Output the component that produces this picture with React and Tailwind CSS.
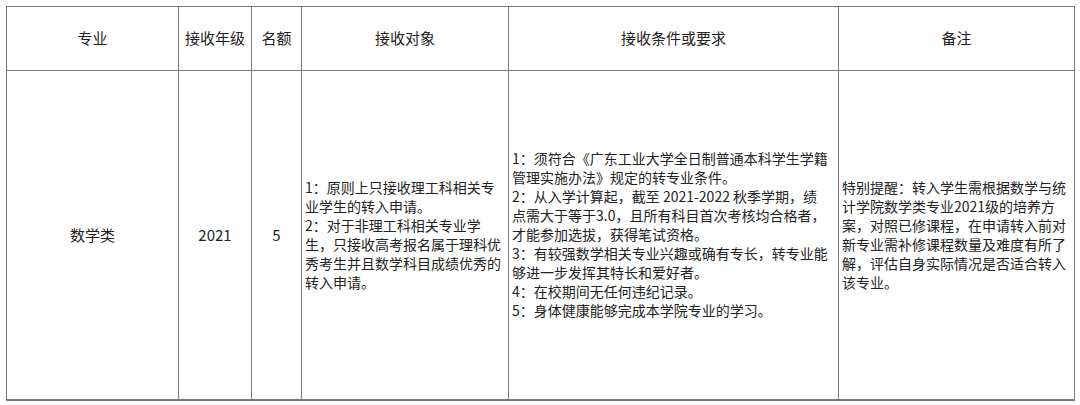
const font = { fontFamily: '"Noto Sans CJK SC", "Microsoft YaHei", sans-serif' };

const Lines = ({ lines }) => (
  <div className="text-left leading-[19px]">
    {lines.map((l, i) => (
      <div key={i} className="whitespace-nowrap">{l}</div>
    ))}
  </div>
);

const targets = [
  '1：原则上只接收理工科相关专',
  '业学生的转入申请。',
  '2：对于非理工科相关专业学',
  '生，只接收高考报名属于理科优',
  '秀考生并且数学科目成绩优秀的',
  '转入申请。',
];

const conditions = [
  '1：须符合《广东工业大学全日制普通本科学生学籍',
  '管理实施办法》规定的转专业条件。',
  '2：从入学计算起，截至 2021-2022 秋季学期，绩',
  '点需大于等于3.0，且所有科目首次考核均合格者，',
  '才能参加选拔，获得笔试资格。',
  '3：有较强数学相关专业兴趣或确有专长，转专业能',
  '够进一步发挥其特长和爱好者。',
  '4：在校期间无任何违纪记录。',
  '5：身体健康能够完成本学院专业的学习。',
];

const notes = [
  '特别提醒：转入学生需根据数学与统',
  '计学院数学类专业2021级的培养方',
  '案，对照已修课程，在申请转入前对',
  '新专业需补修课程数量及难度有所了',
  '解，评估自身实际情况是否适合转入',
  '该专业。',
];

export default function App() {
  const th = 'border border-[#7a7a7a] font-normal text-center align-middle text-[15px]';
  const td = 'border border-[#7a7a7a] align-middle text-[14px]';
  return (
    <div className="w-[1080px] h-[405px] bg-white pt-[6px] pl-[6px] text-[#222]" style={font}>
      <table className="border-collapse table-fixed w-[1068px] border-b-2 border-[#7a7a7a]">
        <colgroup>
          <col className="w-[172px]" />
          <col className="w-[73px]" />
          <col className="w-[50px]" />
          <col className="w-[207px]" />
          <col className="w-[330px]" />
          <col className="w-[236px]" />
        </colgroup>
        <thead>
          <tr className="h-[64px]">
            <th className={th}>专业</th>
            <th className={th}>接收年级</th>
            <th className={th}>名额</th>
            <th className={th}>接收对象</th>
            <th className={th}>接收条件或要求</th>
            <th className={th}>备注</th>
          </tr>
        </thead>
        <tbody>
          <tr className="h-[329px]">
            <td className={td + ' text-center text-[15px]'}>数学类</td>
            <td className={td + ' text-center text-[15px]'}>2021</td>
            <td className={td + ' text-center text-[15px]'}>5</td>
            <td className={td + ' pl-[3px]'}><Lines lines={targets} /></td>
            <td className={td + ' pl-[3px]'}><Lines lines={conditions} /></td>
            <td className={td + ' pl-[3px]'}><Lines lines={notes} /></td>
          </tr>
        </tbody>
      </table>
    </div>
  );
}
